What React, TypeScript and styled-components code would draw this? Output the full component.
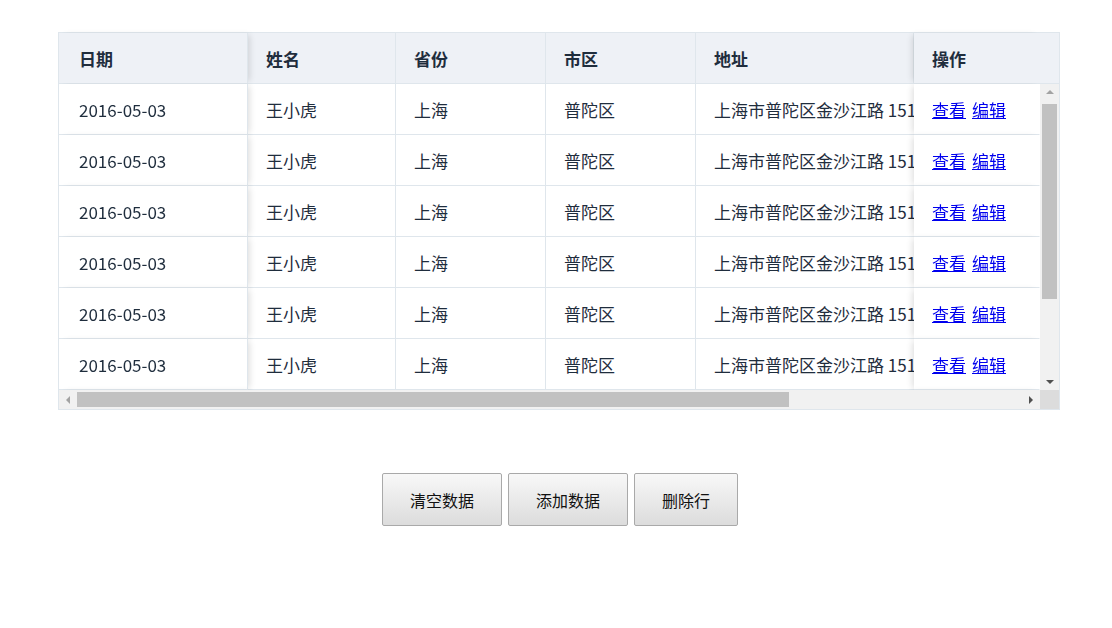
import styled, { createGlobalStyle } from "styled-components";

const GlobalStyle = createGlobalStyle`
  body {
    margin: 0;
    background: #fff;
    font-family: "Noto Sans CJK SC", "Liberation Sans", sans-serif;
    color: #1f2d3d;
  }
`;

const Page = styled.div`
  padding: 32px 0 0 58px;
`;

const TableBox = styled.div`
  width: 1002px;
  border: 1px solid #dfe6ec;
  box-sizing: border-box;
`;

const HeaderRow = styled.div`
  display: flex;
  height: 51px;
  background: #eef1f6;
  border-bottom: 1px solid #dfe6ec;
  box-sizing: border-box;
`;

const HeadCell = styled.div<{ $w: number; $shadow?: "left" | "right" }>`
  flex: 0 0 ${(p) => p.$w}px;
  display: flex;
  align-items: center;
  padding-left: ${(p) => (p.$w === 189 ? 20 : 18)}px;
  box-sizing: border-box;
  font-weight: bold;
  font-size: 17px;
  border-right: 1px solid ${(p) => (p.$shadow === "right" ? "transparent" : "#dfe6ec")};
  position: relative;
  overflow: hidden;
  box-shadow: ${(p) =>
    p.$shadow === "left"
      ? "4px 0 6px -2px rgba(0,0,0,0.12)"
      : p.$shadow === "right"
      ? "-4px 0 6px -2px rgba(0,0,0,0.12)"
      : "none"};
  z-index: ${(p) => (p.$shadow ? 1 : 0)};
`;

const Gutter = styled.div`
  flex: 1;
  background: #eef1f6;
`;

const BodyArea = styled.div`
  display: flex;
  height: 306px;
`;

const Viewport = styled.div`
  flex: 1;
  overflow: hidden;
`;

const Table = styled.table`
  border-collapse: separate;
  border-spacing: 0;
  table-layout: fixed;
  width: 1150px;
`;

const Cell = styled.td<{ $w: number; $fixed?: "left" | "right" }>`
  width: ${(p) => p.$w}px;
  height: 51px;
  padding: 0 0 0 ${(p) => (p.$w === 189 ? 20 : 18)}px;
  box-sizing: border-box;
  border-bottom: 1px solid #dfe6ec;
  border-right: 1px solid ${(p) => (p.$fixed === "right" ? "transparent" : "#dfe6ec")};
  font-size: 17px;
  white-space: nowrap;
  overflow: hidden;
  background: #fff;
  position: ${(p) => (p.$fixed ? "sticky" : "static")};
  left: ${(p) => (p.$fixed === "left" ? "0" : "auto")};
  right: ${(p) => (p.$fixed === "right" ? "0" : "auto")};
  z-index: ${(p) => (p.$fixed ? 1 : 0)};
  box-shadow: ${(p) =>
    p.$fixed === "left"
      ? "4px 0 6px -2px rgba(0,0,0,0.12)"
      : p.$fixed === "right"
      ? "-4px 0 6px -2px rgba(0,0,0,0.12)"
      : "none"};
`;

const Link = styled.a`
  color: #0000ee;
  text-decoration: underline;
  margin-right: 6px;
  cursor: pointer;
`;

const VBar = styled.div`
  flex: 0 0 19px;
  background: #f1f1f1;
  display: flex;
  flex-direction: column;
  align-items: center;
`;

const HBarRow = styled.div`
  display: flex;
  height: 19px;
`;

const HBar = styled.div`
  flex: 1;
  background: #f1f1f1;
  display: flex;
  align-items: center;
`;

const Corner = styled.div`
  flex: 0 0 19px;
  background: #dcdcdc;
`;

const Arrow = styled.div<{ $dir: "up" | "down" | "left" | "right" }>`
  flex: 0 0 auto;
  width: 0;
  height: 0;
  margin: ${(p) => (p.$dir === "up" || p.$dir === "down" ? "6px 0" : "0 7px")};
  border: 4px solid transparent;
  ${(p) =>
    p.$dir === "up"
      ? "border-bottom-color:#a3a3a3;border-top-width:0;"
      : p.$dir === "down"
      ? "border-top-color:#505050;border-bottom-width:0;"
      : p.$dir === "left"
      ? "border-right-color:#a3a3a3;border-left-width:0;"
      : "border-left-color:#505050;border-right-width:0;"}
`;

const VThumb = styled.div`
  width: 15px;
  margin-top: 4px;
  height: 195px;
  background: #c1c1c1;
`;

const VSpace = styled.div`
  flex: 1;
`;

const HThumb = styled.div`
  height: 15px;
  width: 712px;
  background: #c1c1c1;
`;

const HSpace = styled.div`
  flex: 1;
`;

const Actions = styled.div`
  display: flex;
  justify-content: center;
  gap: 6px;
  margin-top: 63px;
  padding-right: 50px;
`;

const Button = styled.button`
  height: 53px;
  padding: 0 27px;
  font-family: "Noto Sans CJK SC", sans-serif;
  font-size: 16px;
  color: #111;
  border: 1px solid #a9a9a9;
  border-radius: 2px;
  background: linear-gradient(#f8f8f8, #dcdcdc);
`;

const rows = Array.from({ length: 10 }, () => ({
  date: "2016-05-03",
  name: "王小虎",
  province: "上海",
  city: "普陀区",
  address: "上海市普陀区金沙江路 1518 弄",
}));

export default function App() {
  return (
    <Page>
      <GlobalStyle />
      <TableBox>
        <HeaderRow>
          <HeadCell $w={189} $shadow="left">日期</HeadCell>
          <HeadCell $w={148}>姓名</HeadCell>
          <HeadCell $w={150}>省份</HeadCell>
          <HeadCell $w={150}>市区</HeadCell>
          <HeadCell $w={218}>地址</HeadCell>
          <HeadCell $w={126} $shadow="right">操作</HeadCell>
          <Gutter />
        </HeaderRow>
        <BodyArea>
          <Viewport>
            <Table>
              <tbody>
                {rows.map((r, i) => (
                  <tr key={i}>
                    <Cell $w={189} $fixed="left">{r.date}</Cell>
                    <Cell $w={148}>{r.name}</Cell>
                    <Cell $w={150}>{r.province}</Cell>
                    <Cell $w={150}>{r.city}</Cell>
                    <Cell $w={387}>{r.address}</Cell>
                    <Cell $w={126} $fixed="right">
                      <Link>查看</Link>
                      <Link>编辑</Link>
                    </Cell>
                  </tr>
                ))}
              </tbody>
            </Table>
          </Viewport>
          <VBar>
            <Arrow $dir="up" />
            <VThumb />
            <VSpace />
            <Arrow $dir="down" />
          </VBar>
        </BodyArea>
        <HBarRow>
          <HBar>
            <Arrow $dir="left" />
            <HThumb />
            <HSpace />
            <Arrow $dir="right" />
          </HBar>
          <Corner />
        </HBarRow>
      </TableBox>
      <Actions>
        <Button>清空数据</Button>
        <Button>添加数据</Button>
        <Button>删除行</Button>
      </Actions>
    </Page>
  );
}
